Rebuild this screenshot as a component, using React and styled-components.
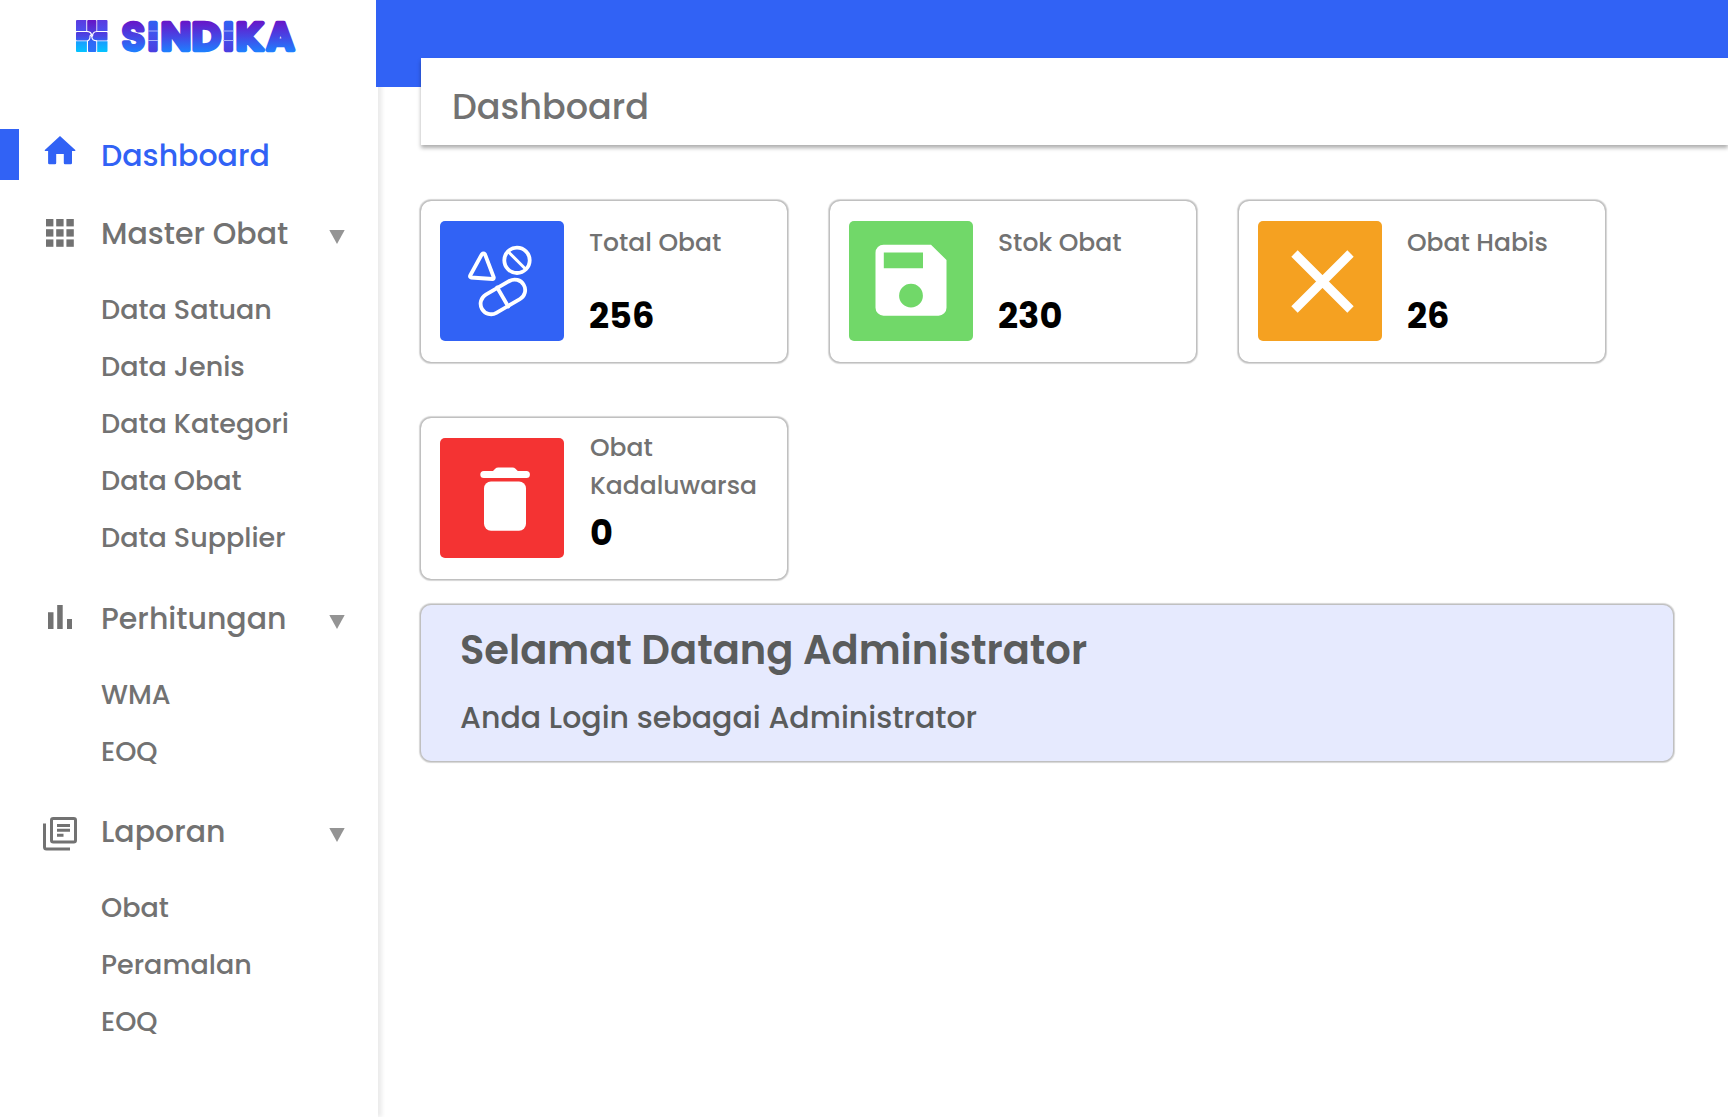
import React from "react";
import styled, { createGlobalStyle } from "styled-components";

const GlobalStyle = createGlobalStyle`
  * { box-sizing: border-box; }
  body {
    margin: 0;
    background: #fff;
    font-family: Poppins, Inter, "Liberation Sans", sans-serif;
    font-weight: 500;
    color: #727272;
    overflow: hidden;
  }
  h1, h2, p, ul { margin: 0; padding: 0; font-weight: inherit; }
  ul { list-style: none; }
  svg { display: block; flex: none; }
`;

const Page = styled.div`
  display: flex;
  height: 1117px;
`;

const Sidebar = styled.aside`
  flex: none;
  width: 378px;
  background: #fff;
  box-shadow: 4px 0 4px rgba(0, 0, 0, 0.08);
`;

const Brand = styled.div`
  height: 129px;
  padding-left: 72px;
`;

const Group = styled.div`
  margin-bottom: ${(p) => p.$gap}px;
`;

const GroupHead = styled.div`
  display: flex;
  align-items: center;
  height: 51px;
  padding-right: 33px;
  color: ${(p) => (p.$active ? "#3162f5" : "#727272")};
`;

const Marker = styled.span`
  width: 19px;
  height: 51px;
  background: ${(p) => (p.$active ? "#3162f5" : "transparent")};
`;

const IconSlot = styled.span`
  display: flex;
  justify-content: center;
  width: 82px;
  padding-top: ${(p) => Math.max(p.$drop || 0, 0)}px;
  padding-bottom: ${(p) => Math.max(-(p.$drop || 0), 0)}px;
`;

const CaretSlot = styled.span`
  padding-top: 6px;
`;

const GroupLabel = styled.span`
  flex: 1;
  padding-top: ${(p) => (p.$active ? 2 : 0)}px;
  font-size: 30px;
  line-height: 48px;
  white-space: nowrap;
`;

const SubList = styled.ul`
  padding: 22px 0 0 101px;
`;

const SubItem = styled.li`
  height: 57px;
  line-height: 57px;
  font-size: 27px;
  white-space: nowrap;
`;

const Main = styled.main`
  flex: 1;
  min-width: 0;
`;

const TopBar = styled.header`
  position: relative;
  height: 87px;
  margin-left: -2px;
  background: #3162f5;
`;

const TitleBar = styled.section`
  position: relative;
  display: flex;
  align-items: center;
  height: 87px;
  margin: -29px 0 0 43px;
  padding: 11px 0 0 31px;
  background: #fff;
  box-shadow: 0 3px 4px rgba(0, 0, 0, 0.32);
`;

const Title = styled.h1`
  font-size: 35px;
  line-height: 48px;
`;

const Content = styled.div`
  padding: 56px 55px 0 43px;
`;

const Cards = styled.section`
  display: grid;
  grid-template-columns: repeat(3, 366px);
  gap: 56px 43px;
`;

const Card = styled.article`
  display: flex;
  align-items: flex-start;
  gap: ${(p) => (p.$tall ? 26 : 25)}px;
  height: 161px;
  padding: 20px 0 20px 19px;
  border-radius: 10px;
  box-shadow: 0 0 0 1px #c0c0c0, 0 0 1px 2px rgba(0, 0, 0, 0.17);
`;

const Tile = styled.div`
  flex: none;
  width: 124px;
  height: 120px;
  border-radius: 5px;
  background: ${(p) => p.$color};
`;

const CardText = styled.div`
  display: flex;
  flex-direction: column;
  justify-content: space-between;
  width: 170px;
  height: ${(p) => (p.$tall ? 127 : 115)}px;
  margin-top: ${(p) => (p.$tall ? -9 : 3)}px;
`;

const CardLabel = styled.p`
  font-size: 25px;
  line-height: 38px;
`;

const CardValue = styled.p`
  font-size: 35.2px;
  line-height: 46px;
  font-weight: 700;
  color: #000;
`;

const Welcome = styled.section`
  height: 156px;
  margin-top: 26px;
  padding: 17px 39px;
  border-radius: 10px;
  background: #e6eafe;
  color: #5a5c5c;
  box-shadow: 0 0 0 1px #c0c0c0, 0 0 1px 2px rgba(0, 0, 0, 0.17);
`;

const WelcomeTitle = styled.h2`
  font-size: 40px;
  line-height: 56px;
  font-weight: 600;
`;

const WelcomeText = styled.p`
  margin-top: 19px;
  font-size: 30px;
  line-height: 42px;
`;

const WORDMARK = [
  ["S", 121.8, 23.4, 500],
  ["I", 147.8, 10.4, 600],
  ["N", 160.8, 30.4, 600],
  ["D", 191.8, 29, 600],
  ["I", 223.3, 10.4, 600],
  ["K", 235.8, 28, 600],
  ["A", 266.6, 27.8, 600],
];

const Logo = () => (
  <svg width="230" height="70" viewBox="72 0 230 70">
    <defs>
      <linearGradient id="word" gradientUnits="userSpaceOnUse" x1="0" y1="20" x2="0" y2="52">
        <stop offset="0" stopColor="#6a12c6" />
        <stop offset="0.5" stopColor="#4744e4" />
        <stop offset="1" stopColor="#1e80ff" />
      </linearGradient>
      <linearGradient id="bar" gradientUnits="userSpaceOnUse" x1="0" y1="20" x2="0" y2="52">
        <stop offset="0" stopColor="#2f62f2" />
        <stop offset="0.5" stopColor="#4350ec" />
        <stop offset="1" stopColor="#4a3ee0" />
      </linearGradient>
      <linearGradient id="cyan" x1="0" y1="0" x2="0" y2="1">
        <stop offset="0" stopColor="#1a9cff" />
        <stop offset="1" stopColor="#04c4ff" />
      </linearGradient>
      <linearGradient id="side" x1="0" y1="0" x2="0" y2="1">
        <stop offset="0" stopColor="#5b3be0" />
        <stop offset="1" stopColor="#4c50ee" />
      </linearGradient>
      <linearGradient id="cross" gradientUnits="userSpaceOnUse" x1="0" y1="20" x2="0" y2="52">
        <stop offset="0" stopColor="#6614c6" />
        <stop offset="0.5" stopColor="#4a46e4" />
        <stop offset="0.68" stopColor="#2f68f6" />
        <stop offset="1" stopColor="#2a72fa" />
      </linearGradient>
    </defs>
    <g>
      <path fill="url(#side)" d="M77 20h9.300v11h-10.300v-10a1 1 0 0 1 1-1zM97.200 20h9.300a1 1 0 0 1 1 1v10h-10.300z" />
      <path
        fill="url(#cross)"
        d="M88.200 20h7.200a1 1 0 0 1 1 1v11h10.100a1 1 0 0 1 1 1v6.500a1 1 0 0 1-1 1H96.200V51a1 1 0 0 1-1 1h-6.200a1 1 0 0 1-1-1V40.500H77a1 1 0 0 1-1-1V33a1 1 0 0 1 1-1H87.200V21a1 1 0 0 1 1-1z"
      />
      <path fill="url(#cyan)" d="M76 41.300h10.900v10.700h-9.900a1 1 0 0 1-1-1zM97.200 41.300h10.300v9.700a1 1 0 0 1-1 1h-9.300z" />
      <path
        fill="none"
        stroke="#fff"
        strokeWidth="1.100"
        d="M86.500 31.400q5 .3 5.200 4.300M97 31.500q-4.800.3-4.300 4.500M97 40.900q-5-.3-5.200-4.200M87.300 41q3-1 2.700-5q.8-2 3-.5"
      />
      <circle cx="91.900" cy="36.200" r="0.900" fill="#fff" />
    </g>
    <g
      fontFamily="Poppins, Inter, sans-serif"
      fontSize="39.500"
      strokeWidth="4.400"
      strokeLinejoin="round"
    >
      {WORDMARK.map(([ch, x, w, weight], i) => (
        <text
          key={i}
          x={x}
          y="49.800"
          fontWeight={weight}
          textLength={w}
          lengthAdjust="spacingAndGlyphs"
          fill={ch === "I" ? "url(#bar)" : "url(#word)"}
          stroke={ch === "I" ? "url(#bar)" : "url(#word)"}
        >
          {ch}
        </text>
      ))}
    </g>
    <path d="M148 31h10M148 40.500h10M223 31h10.500M223 40.500h10.500" stroke="#a9b4fa" strokeWidth="1" />
  </svg>
);

const HomeIcon = () => (
  <svg width="36" height="37" viewBox="42 136 36 37" fill="currentColor">
    <path d="M60 136.100 L75.300 150 V151 H72 V163 Q72 164.300 70.700 164.300 H65 Q63.800 164.300 63.800 163 V154 H56.200 V163 Q56.200 164.300 55 164.300 H49.400 Q48.100 164.300 48.100 163 V151 H44.800 V150 Z" />
  </svg>
);

const GridIcon = () => (
  <svg width="28" height="29" viewBox="0 0 28 29" fill="currentColor">
    {[0, 10.2, 20.4].map((y) =>
      [0, 10.2, 20.4].map((x) => <rect key={`${x}-${y}`} x={x} y={y} width="7.400" height="7.400" />)
    )}
  </svg>
);

const BarsIcon = () => (
  <svg width="24" height="24" viewBox="0 0 24 24" fill="currentColor">
    <path d="M0 7.300h5.500V24H0zM9.200 0h5.500v24H9.200zM19 14h5v10h-5z" />
  </svg>
);

const LibraryIcon = () => (
  <svg width="34" height="34" viewBox="0 0 34 34" fill="none" stroke="currentColor">
    <rect x="8.500" y="1.500" width="24" height="23.500" rx="1.800" strokeWidth="3" />
    <path d="M1.500 6.500V30q0 2 2 2H27" strokeWidth="3" />
    <path d="M14 8.500h13M14 13.300h13M14 18.300h6.500" strokeWidth="2.900" />
  </svg>
);

const Caret = () => (
  <svg width="16" height="14" viewBox="0 0 16 14">
    <path d="M0.300 0h15.400L8 14z" fill="#949494" />
  </svg>
);

const TileIcon = ({ children }) => (
  <svg width="124" height="120" viewBox="0 0 124 120">
    {children}
  </svg>
);

const PillsIcon = () => (
  <TileIcon>
    <g fill="none" stroke="#fff" strokeWidth="3.800" strokeLinejoin="round" strokeLinecap="round">
      <path d="M41.800 33.300Q43.500 31.700 45 33.300L53.800 56.500Q53.800 58 52.500 58L31 56.500Q29.500 56 30.200 54.500Z" />
      <circle cx="77" cy="39.300" r="12.700" />
      <path d="M68.500 31l17 17" strokeWidth="3" />
      <g transform="rotate(-30 62.700 76)">
        <rect x="38.800" y="65.500" width="48.200" height="21" rx="10.500" />
        <path d="M62.700 65v22" />
      </g>
    </g>
  </TileIcon>
);

const SaveIcon = () => (
  <TileIcon>
    <path
      fill="#fff"
      fillRule="evenodd"
      d="M34.500 23.700H82L97.500 39V86.700a8 8 0 0 1-8 8H34.500a8 8 0 0 1-8-8V31.700a8 8 0 0 1 8-8zM34.800 31.500V47.300H74V31.500zM62 62.800a11.900 11.900 0 1 0 0 23.800a11.900 11.900 0 1 0 0-23.800z"
    />
  </TileIcon>
);

const CrossIcon = () => (
  <TileIcon>
    <path d="M36.500 32.500L92.500 88.500M92.500 32.500L36.500 88.500" stroke="#fff" strokeWidth="9" />
  </TileIcon>
);

const TrashIcon = () => (
  <TileIcon>
    <rect x="44" y="43.500" width="42" height="49.300" rx="7" fill="#fff" />
    <path
      fill="#fff"
      d="M43.800 33H53l2.200-2.300q1.200-1.200 3-1.200H72.500q1.800 0 3 1.200L77.800 33H86.400a3.500 3.500 0 0 1 0 7H43.800a3.500 3.500 0 0 1 0-7z"
    />
  </TileIcon>
);

const MENU = [
  { label: "Dashboard", icon: HomeIcon, active: true, gap: 28, items: [] },
  {
    label: "Master Obat",
    icon: GridIcon,
    gap: 27,
    items: ["Data Satuan", "Data Jenis", "Data Kategori", "Data Obat", "Data Supplier"],
  },
  { label: "Perhitungan", icon: BarsIcon, drop: -3, gap: 26, items: ["WMA", "EOQ"] },
  { label: "Laporan", icon: LibraryIcon, drop: 4, gap: 0, items: ["Obat", "Peramalan", "EOQ"] },
];

const STATS = [
  { label: "Total Obat", value: "256", color: "#3162f5", icon: PillsIcon },
  { label: "Stok Obat", value: "230", color: "#71d869", icon: SaveIcon },
  { label: "Obat Habis", value: "26", color: "#f5a121", icon: CrossIcon },
  { label: "Obat Kadaluwarsa", value: "0", color: "#f43333", icon: TrashIcon, tall: true },
];

export default function App() {
  return (
    <>
      <GlobalStyle />
      <Page>
        <Sidebar>
          <Brand>
            <Logo />
          </Brand>
          <nav>
            {MENU.map(({ label, icon: Icon, drop, active, gap, items }) => (
              <Group key={label} $gap={gap}>
                <GroupHead $active={active}>
                  <Marker $active={active} />
                  <IconSlot $drop={drop}>
                    <Icon />
                  </IconSlot>
                  <GroupLabel $active={active}>{label}</GroupLabel>
                  {!active && (
                    <CaretSlot>
                      <Caret />
                    </CaretSlot>
                  )}
                </GroupHead>
                {items.length > 0 && (
                  <SubList>
                    {items.map((text) => (
                      <SubItem key={text}>{text}</SubItem>
                    ))}
                  </SubList>
                )}
              </Group>
            ))}
          </nav>
        </Sidebar>
        <Main>
          <TopBar />
          <TitleBar>
            <Title>Dashboard</Title>
          </TitleBar>
          <Content>
            <Cards>
              {STATS.map(({ label, value, color, icon: Icon, tall }) => (
                <Card key={label} $tall={tall}>
                  <Tile $color={color}>
                    <Icon />
                  </Tile>
                  <CardText $tall={tall}>
                    <CardLabel>{label}</CardLabel>
                    <CardValue>{value}</CardValue>
                  </CardText>
                </Card>
              ))}
            </Cards>
            <Welcome>
              <WelcomeTitle>Selamat Datang Administrator</WelcomeTitle>
              <WelcomeText>Anda Login sebagai Administrator</WelcomeText>
            </Welcome>
          </Content>
        </Main>
      </Page>
    </>
  );
}
